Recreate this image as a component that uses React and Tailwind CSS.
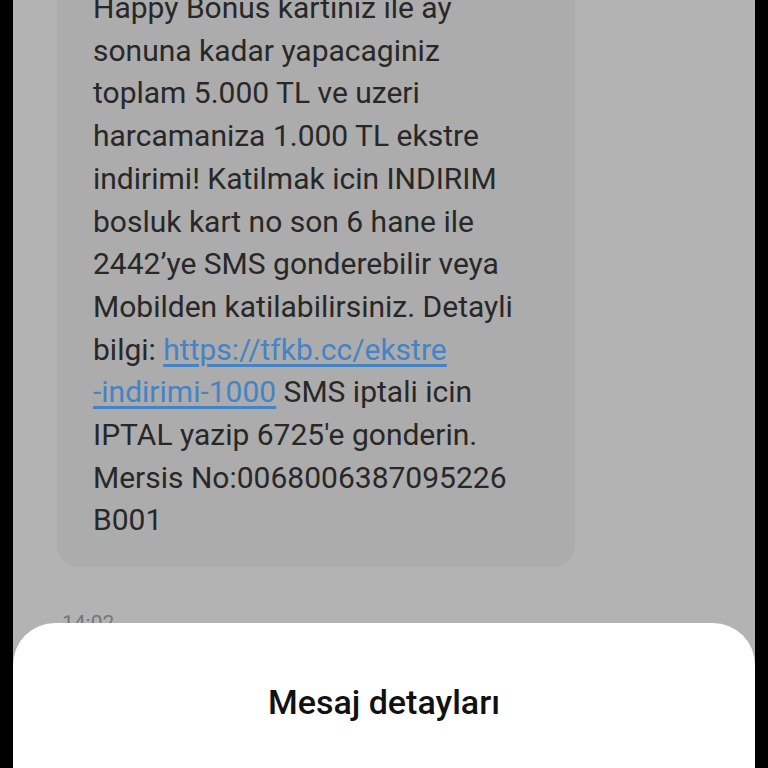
import React from 'react';

const lines = [
  'Happy Bonus kartiniz ile ay',
  'sonuna kadar yapacaginiz',
  'toplam 5.000 TL ve uzeri',
  'harcamaniza 1.000 TL ekstre',
  'indirimi! Katilmak icin INDIRIM',
  'bosluk kart no son 6 hane ile',
  '2442\u2019ye SMS gonderebilir veya',
  'Mobilden katilabilirsiniz. Detayli',
];

const App = () => {
  return (
    <div className="w-[768px] h-[768px] bg-black px-[13px] overflow-hidden" style={{ fontFamily: 'Roboto, "Noto Sans", sans-serif' }}>
      <div className="relative h-full bg-[#b3b3b3] overflow-hidden">
        <div className="mt-[-38px] ml-[44px] w-[518px] rounded-[22px] bg-[#acacac] pt-[25px] pb-[25px] pl-[36px] text-[30px] leading-[42.7px] text-[#282828] whitespace-nowrap">
          {lines.map((line) => (
            <div key={line}>{line}</div>
          ))}
          <div>
            bilgi: <span className="text-[#4483c6] underline underline-offset-[4px]">https://tfkb.cc/ekstre</span>
          </div>
          <div>
            <span className="text-[#4483c6] underline underline-offset-[4px]">-indirimi-1000</span> SMS iptali icin
          </div>
          <div>IPTAL yazip 6725'e gonderin.</div>
          <div>Mersis No:0068006387095226</div>
          <div>B001</div>
        </div>
        <div className="mt-[46px] ml-[49px] text-[21px] leading-none text-[#777777]">14:02</div>

        <div className="absolute left-0 right-0 bottom-0 h-[145px] bg-white rounded-t-[42px] flex justify-center pt-[58px]">
          <h2 className="text-[34px] leading-[42px] font-medium text-[#111111]">Mesaj detayları</h2>
        </div>
      </div>
    </div>
  );
};

export default App;
